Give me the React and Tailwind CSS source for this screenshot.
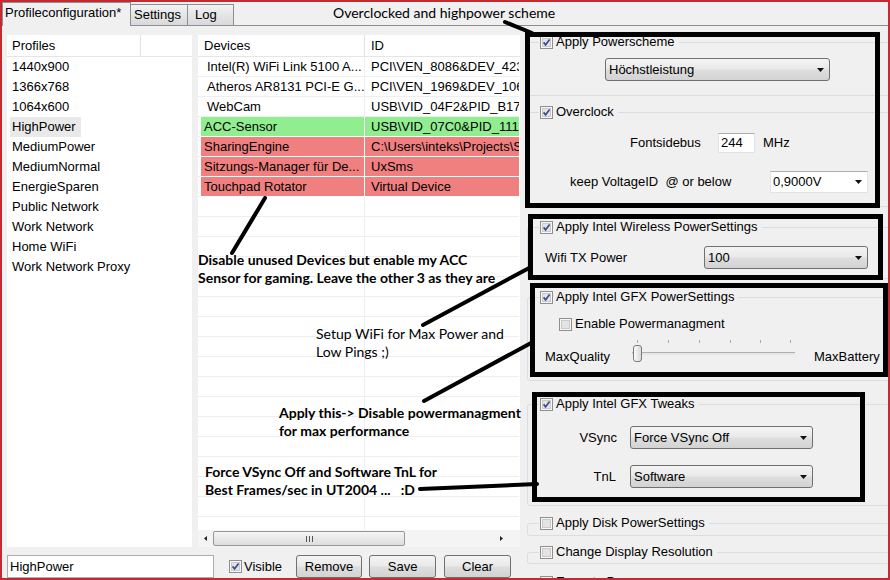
import React from 'react';

const profiles = [
  '1440x900',
  '1366x768',
  '1064x600',
  'HighPower',
  'MediumPower',
  'MediumNormal',
  'EnergieSparen',
  'Public Network',
  'Work Network',
  'Home WiFi',
  'Work Network Proxy',
];

const devices = [
  { name: 'Intel(R) WiFi Link 5100 A...', id: 'PCI\\VEN_8086&DEV_4232&SUBSYS', tone: null },
  { name: 'Atheros AR8131 PCI-E G...', id: 'PCI\\VEN_1969&DEV_1063&SUBSYS', tone: null },
  { name: 'WebCam', id: 'USB\\VID_04F2&PID_B175&MI_00', tone: null },
  { name: 'ACC-Sensor', id: 'USB\\VID_07C0&PID_1111&MI_00', tone: 'green' },
  { name: 'SharingEngine', id: 'C:\\Users\\inteks\\Projects\\Sharing', tone: 'red' },
  { name: 'Sitzungs-Manager für De...', id: 'UxSms', tone: 'red' },
  { name: 'Touchpad Rotator', id: 'Virtual Device', tone: 'red' },
];

function Check({ on = true }) {
  return (
    <svg width="13" height="13" viewBox="0 0 13 13" className="shrink-0">
      <rect x="0.5" y="0.5" width="12" height="12" fill="#f7f7f7" stroke="#8f8f8f" />
      <rect x="2.5" y="2.5" width="8" height="8" fill="#e4e4e4" stroke="#cacaca" />
      {on && <path d="M3.6 6.4 L5.6 8.8 L9.6 3.6" fill="none" stroke="#3b4f8e" strokeWidth="1.7" />}
    </svg>
  );
}

function Arrow() {
  return (
    <svg width="7" height="4" viewBox="0 0 7 4" className="shrink-0">
      <path d="M0 0H7L3.5 4Z" fill="#111" />
    </svg>
  );
}

function Combo({ className, children }) {
  return (
    <div className={`flex shrink-0 items-center justify-between rounded-[3px] border border-[#707070] bg-[linear-gradient(#f4f4f4,#eaeaea_45%,#dddddd_55%,#d3d3d3)] pl-[3px] pr-[5px] ${className}`}>
      <span>{children}</span>
      <Arrow />
    </div>
  );
}

function Btn({ className, children }) {
  return (
    <div className={`flex h-[23px] items-center justify-center rounded-[3px] border border-[#707070] bg-[linear-gradient(#f4f4f4,#eaeaea_45%,#dddddd_55%,#d3d3d3)] ${className}`}>
      {children}
    </div>
  );
}

function Group({ className, title, on = true, children }) {
  return (
    <div className={`w-[370px] shrink-0 rounded-[3px] border border-[#d5dfe5] ${className}`}>
      <div className="-mt-[10px] ml-[11px] flex h-[18px] w-fit items-center gap-[3px] bg-[#f0f0f0] pl-[1px] pr-[4px]">
        <Check on={on} />
        <span>{title}</span>
      </div>
      {children}
    </div>
  );
}

function Tabs() {
  return (
    <div className="flex h-[24px] shrink-0 items-end border-b border-[#8c8e94]">
      <div className="-mb-px h-[24px] w-[129px] border border-b-0 border-[#8c8e94] bg-[#f0f0f0] pl-[2px] pt-[2px]">
        Profileconfiguration*
      </div>
      <div className="flex h-[21px] w-[57px] items-center border border-b-0 border-l-0 border-[#8c8e94] bg-linear-to-b from-[#f2f2f2] to-[#d9d9d9] pl-[3px]">
        Settings
      </div>
      <div className="flex h-[21px] w-[46px] items-center border border-b-0 border-l-0 border-[#8c8e94] bg-linear-to-b from-[#f2f2f2] to-[#d9d9d9] pl-[7px]">
        Log
      </div>
    </div>
  );
}

function ProfilesList() {
  return (
    <div className="flex w-[185px] flex-col bg-white">
      <div className="flex h-[22px] shrink-0 border-b border-[#e5e5e5]">
        <div className="flex w-[134px] items-center border-r border-[#e3e3e3] pl-[5px]">Profiles</div>
      </div>
      {profiles.map((p) => (
        <div key={p} className="flex h-[20px] pl-[3px]">
          <span className={`flex items-center pl-[2px] pr-[5px] ${p === 'HighPower' ? 'bg-[#e9e9e9]' : ''}`}>{p}</span>
        </div>
      ))}
    </div>
  );
}

function DeviceRow({ d }) {
  const bg = d.tone === 'green' ? 'bg-[#90ee90] border-white' : d.tone === 'red' ? 'bg-[#f08080] border-white' : 'border-[#eeeeee]';
  return (
    <div className="flex h-[20px] shrink-0 pr-[1px]">
      <div className="w-[3px] border-b border-[#eeeeee]" />
      <div className={`flex w-[164px] items-center overflow-hidden whitespace-nowrap border-r border-b ${bg} ${d.tone ? 'pl-[3px]' : 'pl-[6px]'}`}>
        {d.name}
      </div>
      <div className={`flex min-w-0 flex-1 items-center overflow-hidden whitespace-nowrap border-b pl-[6px] ${bg}`}>
        {d.id}
      </div>
    </div>
  );
}

function DevicesList() {
  const empty = Array.from({ length: 18 }, (_, i) => ({ name: '', id: '', tone: null, key: 'e' + i }));
  return (
    <div className="flex w-[322px] flex-col bg-white">
      <div className="flex h-[22px] shrink-0 border-b border-[#e5e5e5]">
        <div className="flex w-[167px] items-center border-r border-[#e3e3e3] pl-[6px]">Devices</div>
        <div className="flex flex-1 items-center pl-[6px]">ID</div>
      </div>
      <div className="flex min-h-0 flex-1 flex-col overflow-hidden">
        {devices.map((d) => (
          <DeviceRow key={d.name} d={d} />
        ))}
        {empty.map((d) => (
          <DeviceRow key={d.key} d={d} />
        ))}
      </div>
      <div className="flex h-[17px] shrink-0 items-center bg-[#f4f4f4]">
        <div className="flex w-[15px] justify-center">
          <svg width="3" height="5" viewBox="0 0 3 5"><path d="M3 0V5L0 2.5Z" fill="#222" /></svg>
        </div>
        <div className="flex h-[15px] w-[192px] items-center justify-center gap-[2px] rounded-[2px] border border-[#979797] bg-[linear-gradient(#f5f5f5,#e9e9e9_50%,#dedede)]">
          <span className="h-[6px] w-px bg-[#555]" />
          <span className="h-[6px] w-px bg-[#555]" />
          <span className="h-[6px] w-px bg-[#555]" />
        </div>
        <div className="flex-1" />
        <div className="mr-[10px] flex w-[17px] justify-center">
          <svg width="3" height="5" viewBox="0 0 3 5"><path d="M0 0V5L3 2.5Z" fill="#222" /></svg>
        </div>
      </div>
    </div>
  );
}

function LeftPane() {
  return (
    <div className="flex w-[518px] shrink-0 flex-col pl-[5px] pt-[9px]">
      <div className="flex h-[512px] shrink-0 gap-[6px]">
        <ProfilesList />
        <DevicesList />
      </div>
      <div className="mt-[8px] flex h-[23px] shrink-0 items-center">
        <div className="flex h-[23px] w-[207px] items-center border border-[#abadb3] bg-white pl-[2px]">HighPower</div>
        <div className="ml-[15px] flex items-center gap-[2px]">
          <Check />
          <span>Visible</span>
        </div>
        <Btn className="ml-[14px] w-[66px]">Remove</Btn>
        <Btn className="ml-[7px] w-[67px]">Save</Btn>
        <Btn className="ml-[8px] w-[67px]">Clear</Btn>
      </div>
    </div>
  );
}

function Slider() {
  const ticks = ['left-[5px]', 'left-[36px]', 'left-[67px]', 'left-[98px]', 'left-[128px]', 'left-[158px]'];
  return (
    <div className="relative h-[24px] w-[163px] shrink-0">
      {ticks.map((t) => (
        <span key={t} className={`absolute top-0 h-[3px] w-px bg-[#a8a8a8] ${t}`} />
      ))}
      <div className="absolute left-0 right-0 top-[12px] h-[3px] border-t border-[#b0b0b0] bg-[#e6e6e6]" />
      <div className="absolute left-[1px] top-[5px] h-[17px] w-[9px] rounded-[3px] border border-[#7a7a7a] bg-linear-to-r from-[#fbfbfb] to-[#dadada]" />
    </div>
  );
}

function RightPane() {
  return (
    <div className="flex min-w-0 flex-1 flex-col overflow-hidden pl-[7px]">
      <Group className="mt-[16px] h-[54px]" title="Apply Powerscheme">
        <Combo className="ml-[77px] mt-[7px] h-[23px] w-[225px]">Höchstleistung</Combo>
      </Group>

      <Group className="mt-[16px] h-[95px]" title="Overclock">
        <div className="ml-[102px] mt-[12px] flex h-[20px] items-center">
          <span className="w-[88px] shrink-0">Fontsidebus</span>
          <div className="flex h-[20px] w-[37px] items-center border border-[#e0e4e8] border-t-[#abadb3] bg-white pl-[2px]">244</div>
          <span className="ml-[8px]">MHz</span>
        </div>
        <div className="ml-[42px] mt-[18px] flex h-[22px] items-center">
          <span className="w-[200px] shrink-0 whitespace-pre">keep VoltageID  @ or below</span>
          <div className="flex h-[22px] w-[98px] items-center justify-between border border-[#e0e4e8] border-t-[#abadb3] bg-white pl-[2px] pr-[5px]">
            <span>0,9000V</span>
            <Arrow />
          </div>
        </div>
      </Group>

      <Group className="mt-[20px] h-[52px]" title="Apply Intel Wireless PowerSettings">
        <div className="ml-[17px] mt-[10px] flex h-[23px] items-center">
          <span className="w-[159px] shrink-0">Wifi TX Power</span>
          <Combo className="h-[23px] w-[164px]">100</Combo>
        </div>
      </Group>

      <Group className="mt-[18px] h-[84px]" title="Apply Intel GFX PowerSettings">
        <div className="ml-[31px] mt-[9px] flex h-[18px] items-center gap-[3px]">
          <Check on={false} />
          <span>Enable Powermanagment</span>
        </div>
        <div className="ml-[17px] mt-[7px] flex h-[24px] items-start">
          <span className="mt-[9px] w-[87px] shrink-0">MaxQuality</span>
          <Slider />
          <span className="ml-[19px] mt-[9px]">MaxBattery</span>
        </div>
      </Group>

      <Group className="mt-[23px] h-[102px]" title="Apply Intel GFX Tweaks">
        <div className="mt-[13px] flex h-[23px] items-center">
          <span className="w-[89px] shrink-0 text-right">VSync</span>
          <Combo className="ml-[13px] h-[23px] w-[183px]">Force VSync Off</Combo>
        </div>
        <div className="mt-[16px] flex h-[23px] items-center">
          <span className="w-[88px] shrink-0 text-right">TnL</span>
          <Combo className="ml-[14px] h-[23px] w-[183px]">Software</Combo>
        </div>
      </Group>

      <Group className="mt-[17px] h-[13px]" title="Apply Disk PowerSettings" on={false} />
      <Group className="mt-[16px] h-[12px]" title="Change Display Resolution" on={false} />
      <Group className="mt-[18px] h-[40px]" title="Execute Programm" on={false} />
    </div>
  );
}

function Notes() {
  return (
    <>
      <svg className="pointer-events-none absolute left-0 top-0" width="890" height="580">
        <g fill="none" stroke="#000" strokeWidth="5">
          <rect x="527.5" y="34.5" width="350" height="171" />
          <rect x="530.5" y="216.5" width="350" height="61" />
          <rect x="532.5" y="285.5" width="353" height="89" />
          <rect x="534.5" y="394.5" width="328" height="105" />
        </g>
        <g stroke="#000" strokeWidth="4" strokeLinecap="round">
          <line x1="505" y1="22" x2="532" y2="33" />
          <line x1="265" y1="198" x2="232" y2="253" />
          <line x1="423" y1="325" x2="531" y2="267" />
          <line x1="424" y1="401" x2="531" y2="343" />
          <line x1="420" y1="489" x2="537" y2="484" />
        </g>
      </svg>
      <div className="pointer-events-none absolute inset-0 font-['Lato',sans-serif] text-[14px] leading-[18px] text-black">
        <div className="absolute left-[333px] top-[4px] whitespace-nowrap">Overclocked and highpower scheme</div>
        <div className="absolute left-[198px] top-[251px] whitespace-nowrap font-bold">
          Disable unused Devices but enable my ACC
          <br />
          Sensor for gaming. Leave the other 3 as they are
        </div>
        <div className="absolute left-[316px] top-[325px] whitespace-nowrap">
          Setup WiFi for Max Power and
          <br />
          Low Pings ;)
        </div>
        <div className="absolute left-[279px] top-[404px] whitespace-nowrap font-bold">
          Apply this-&gt; Disable powermanagment
          <br />
          for max performance
        </div>
        <div className="absolute left-[205px] top-[463px] whitespace-pre font-bold">
          {'Force VSync Off and Software TnL for\nBest Frames/sec in UT2004 ...   :D'}
        </div>
      </div>
    </>
  );
}

export default function App() {
  return (
    <div className="relative h-[580px] w-[890px] overflow-hidden font-['Liberation_Sans',Arial,sans-serif] text-[13px] leading-[16px] text-black">
      <div className="flex h-full w-full flex-col border-2 border-[#c42a2e] bg-[#f0f0f0]">
        <Tabs />
        <div className="flex min-h-0 flex-1">
          <LeftPane />
          <RightPane />
        </div>
      </div>
      <Notes />
    </div>
  );
}
